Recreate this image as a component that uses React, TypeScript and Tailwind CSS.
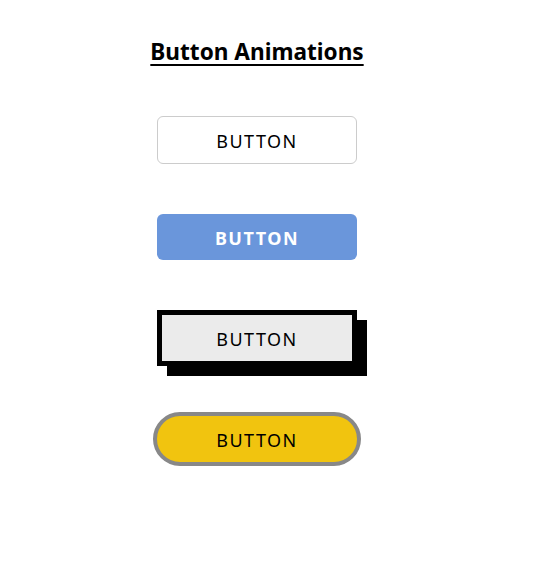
import React from "react";

const label = "text-[18px] tracking-[1.5px] leading-[46px] pt-[1px]";

export default function App() {
  return (
    <div
      className="w-[514px] flex flex-col items-center bg-white text-black"
      style={{ fontFamily: '"Noto Sans", "Open Sans", sans-serif' }}
    >
      <h1 className="mt-[37px] text-[22.6px] font-bold underline underline-offset-[4px] decoration-2 leading-[30px]">
        Button Animations
      </h1>

      <button
        className={`mt-[49px] w-[200px] h-[48px] border border-[#cccccc] rounded-[6px] bg-white ${label}`}
      >
        BUTTON
      </button>

      <button
        className={`mt-[50px] w-[200px] h-[46px] rounded-[6px] bg-[#6a96db] text-white font-bold ${label}`}
      >
        BUTTON
      </button>

      <button
        className={`mt-[50px] w-[200px] h-[56px] border-[5px] border-black bg-[#ebebeb] shadow-[10px_10px_0_0_#000] ${label}`}
      >
        BUTTON
      </button>

      <button
        className={`mt-[46px] w-[208px] h-[54px] border-4 border-[#888888] rounded-full bg-[#f1c40f] ${label}`}
      >
        BUTTON
      </button>
    </div>
  );
}
